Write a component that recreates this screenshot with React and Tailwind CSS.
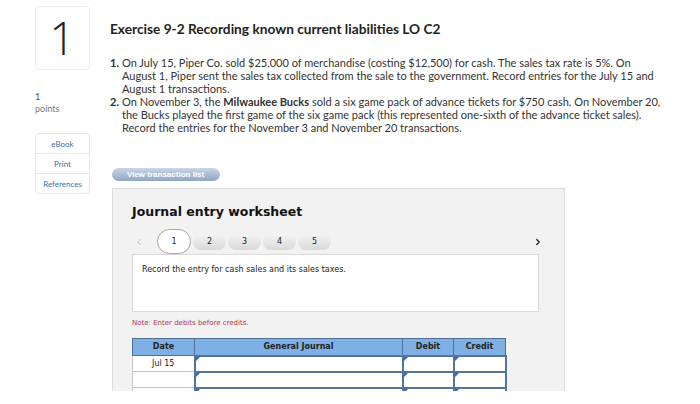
import React from 'react';
import { ChevronLeft, ChevronRight } from 'lucide-react';

const ROWS = [
  { date: 'Jul 15' },
  { date: '' },
  { date: '' },
];

function Marker() {
  return <span className="absolute left-0 top-0 w-0 h-0 border-t-[4px] border-t-[#2e6bc6] border-r-[4px] border-r-transparent" />;
}

export default function App() {
  return (
    <div className="w-[700px] h-[404px] bg-white overflow-hidden font-['Lato',sans-serif] text-[#333]">
      <div className="h-[391px] overflow-hidden flex">
        {/* Left rail */}
        <div className="w-[110px] pl-[35px] pt-[6px] shrink-0">
          <div className="w-[55px] h-[64px] rounded-[4px] border border-[#ececec] flex items-center justify-center">
            <span className="text-[46px] font-light leading-none text-[#222] -mt-[2px] font-['Open_Sans',sans-serif]">1</span>
          </div>
          <div className="mt-[21px] text-[9px] leading-[12px]">
            <div className="text-[#3d5a80]">1</div>
            <div className="text-[#777]">points</div>
          </div>
          <div className="mt-[18px] w-[55px] rounded-[4px] border border-[#e6e6e6] text-[8px] text-[#3b6fae] text-center">
            <div className="h-[20px] flex items-center justify-center border-b border-[#e6e6e6]">eBook</div>
            <div className="h-[20px] flex items-center justify-center border-b border-[#e6e6e6]">Print</div>
            <div className="h-[19px] flex items-center justify-center">References</div>
          </div>
        </div>

        {/* Main column */}
        <div className="flex-1 pt-[21px]">
          <h1 className="text-[13.7px] font-bold leading-[16px] text-[#222]">Exercise 9-2 Recording known current liabilities LO C2</h1>
          <ol className="mt-[19px] w-[557px] text-[11px] leading-[13px] text-[#333]">
            <li className="flex">
              <span className="w-[12px] shrink-0 font-bold">1.</span>
              <span>On July 15, Piper Co. sold $25,000 of merchandise (costing $12,500) for cash. The sales tax rate is 5%. On August 1, Piper sent the sales tax collected from the sale to the government. Record entries for the July 15 and August 1 transactions.</span>
            </li>
            <li className="flex">
              <span className="w-[12px] shrink-0 font-bold">2.</span>
              <span>On November 3, the <b>Milwaukee Bucks</b> sold a six game pack of advance tickets for $750 cash. On November 20, the Bucks played the first game of the six game pack (this represented one-sixth of the advance ticket sales). Record the entries for the November 3 and November 20 transactions.</span>
            </li>
          </ol>

          <button className="mt-[34px] ml-[2px] h-[13px] w-[108px] rounded-full bg-gradient-to-b from-[#c9d6e6] to-[#8ea6c4] text-white text-[8px] font-bold font-['Liberation_Sans',sans-serif] text-left pl-[15px] leading-[13px] block">
            View transaction list
          </button>

          <div className="mt-[7px] ml-[2px] w-[453px] h-[210px] bg-[#f2f2f2] border border-[#dddddd] pl-[19px] pt-[15px] font-['DejaVu_Sans',sans-serif]">
            <h2 className="text-[12.5px] font-bold leading-[16px] text-[#111]">Journal entry worksheet</h2>
            <div className="mt-[9px] flex items-center w-[407px] relative h-[25px]">
              <ChevronLeft className="ml-[2px] mr-[13px] w-[10px] h-[10px] text-[#999]" strokeWidth={1.5} />
              <div className="flex items-center gap-[2px]">
                <div className="w-[34px] h-[25px] rounded-full bg-white border border-[#a8a8a8] flex items-center justify-center text-[8px] text-[#222]">1</div>
                {[2, 3, 4, 5].map((n) => (
                  <div key={n} className="w-[33px] h-[16px] rounded-full bg-gradient-to-b from-[#f4f4f4] to-[#d9d9d9] flex items-center justify-center text-[8px] text-[#222]">{n}</div>
                ))}
              </div>
              <ChevronRight className="absolute right-[-4px] w-[10px] h-[10px] text-[#222]" strokeWidth={3} />
            </div>
            <div className="w-[407px] h-[58px] bg-white border border-[#d9d9d9] px-[9px] pt-[9px] text-[8px] text-[#222]">
              Record the entry for cash sales and its sales taxes.
            </div>
            <p className="mt-[6px] text-[7px] text-[#b0344a] leading-[10px]">Note: Enter debits before credits.</p>
            <table className="mt-[10px] w-[373px] border-collapse text-[8px] text-[#222] table-fixed">
              <colgroup>
                <col className="w-[62px]" />
                <col className="w-[208px]" />
                <col className="w-[51px]" />
                <col className="w-[52px]" />
              </colgroup>
              <thead>
                <tr className="h-[17px] bg-[#7eb0e6]">
                  <th className="border border-[#4f6f99] font-bold">Date</th>
                  <th className="border border-[#4f6f99] font-bold">General Journal</th>
                  <th className="border border-[#4f6f99] font-bold">Debit</th>
                  <th className="border border-[#4f6f99] font-bold">Credit</th>
                </tr>
              </thead>
              <tbody>
                {ROWS.map((r, i) => (
                  <tr key={i} className="h-[16px]">
                    <td className="border border-[#c8c8c8] bg-white text-center">{r.date}</td>
                    <td className="border-2 border-[#5673a0] bg-white relative"><Marker /></td>
                    <td className="border-2 border-[#5673a0] bg-white relative"><Marker /></td>
                    <td className="border-2 border-[#5673a0] bg-white relative"><Marker /></td>
                  </tr>
                ))}
              </tbody>
            </table>
          </div>
        </div>
      </div>
    </div>
  );
}
